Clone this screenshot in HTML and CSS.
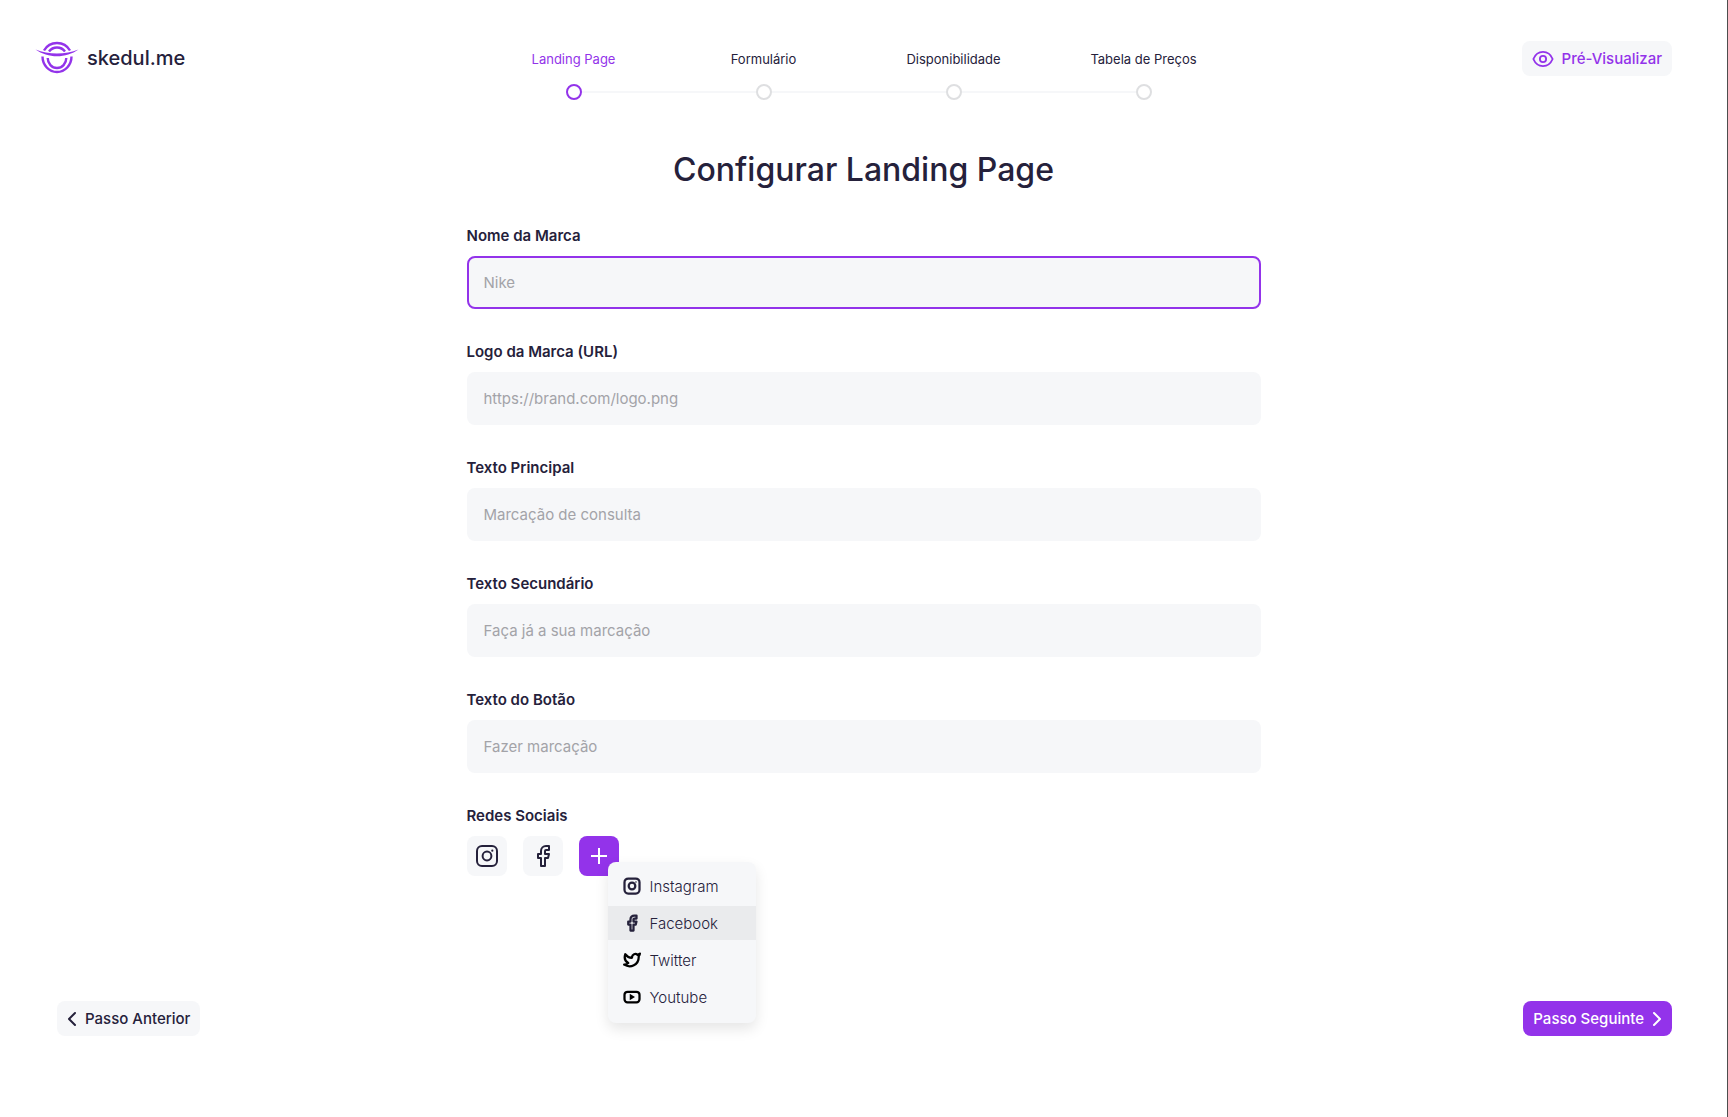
FILE: index.html
```html
<!DOCTYPE html>
<html lang="pt">
<head>
<meta charset="utf-8">
<meta name="viewport" content="width=device-width, initial-scale=1">
<title>skedul.me – Configurar Landing Page</title>
<link rel="stylesheet" href="styles.css">
</head>
<body>
<svg class="sprite" aria-hidden="true">
  <symbol id="instagram" viewBox="0 0 24 24" fill="none" stroke="currentColor">
    <rect x="2" y="2" width="20" height="20" rx="5"/>
    <circle cx="12" cy="12" r="4.4"/>
    <circle cx="17.3" cy="6.7" r="1.1" fill="currentColor" stroke="none"/>
  </symbol>
  <symbol id="facebook" viewBox="0 0 24 24" fill="none" stroke="currentColor" stroke-linejoin="round">
    <path d="M18 2h-3a5 5 0 0 0-5 5v3H7v4h3v8h4v-8h3l1-4h-4V7a1 1 0 0 1 1-1h3z"/>
  </symbol>
  <symbol id="twitter" viewBox="0 0 24 24" fill="none" stroke="currentColor" stroke-linejoin="round">
    <path d="M22.5 3.5c-1 .7-2.1 1.2-3.2 1.5A4.5 4.5 0 0 0 12 8v1C8.500 9.100 5.300 7.400 3 4.300c-1.600 5-.4 9.200 4 11.700-1.600 1.600-3.300 2.200-5.500 2.200 8.500 5 19.500.6 19.500-10.700l-.1-.8c.8-.8 1.300-1.900 1.600-3.200z"/>
  </symbol>
  <symbol id="youtube" viewBox="0 0 24 24" fill="none" stroke="currentColor" stroke-linejoin="round">
    <rect x="2" y="5" width="20" height="14" rx="4"/>
    <path d="M9 7.800v8.400l7-4.200z" fill="currentColor" stroke="none"/>
  </symbol>
</svg>

<header class="topbar">
  <a class="brand" href="#">
    <svg class="brand-mark" viewBox="0 0 44 34" fill="none" stroke="currentColor" stroke-width="2.4" aria-hidden="true">
      <path d="M9 9.500a15 15 0 0 1 26 0"/>
      <path d="M14 10.500a10 10 0 0 1 16 0"/>
      <path d="M7.500 15.500a14.500 15.500 0 0 0 29 0"/>
      <path d="M12.700 17a9.300 10 0 0 0 18.600 0"/>
      <path d="M.5 8.500c13 5.300 30 5.300 43 0C31 17.500 13 17.500 .5 8.500z" fill="currentColor" stroke="none"/>
    </svg>
    <span>skedul.me</span>
  </a>
  <ol class="steps">
    <li class="step current" aria-current="step">Landing Page</li>
    <li class="step">Formulário</li>
    <li class="step">Disponibilidade</li>
    <li class="step">Tabela de Preços</li>
  </ol>
  <button class="btn btn-preview" type="button">
    <svg class="icon-eye" viewBox="0 0 24 24" fill="none" stroke="currentColor" stroke-width="2" aria-hidden="true">
      <path d="M1.500 12C3.500 7.200 7.400 4.300 12 4.300S20.500 7.200 22.500 12c-2 4.800-5.900 7.700-10.500 7.700S3.500 16.800 1.500 12z"/>
      <circle cx="12" cy="12" r="3.400"/>
    </svg>
    Pré-Visualizar
  </button>
</header>

<main class="content">
  <h1>Configurar Landing Page</h1>
  <form class="form">
    <div class="field">
      <label for="brand-name">Nome da Marca</label>
      <input class="active" id="brand-name" type="text" placeholder="Nike">
    </div>
    <div class="field">
      <label for="brand-logo">Logo da Marca (URL)</label>
      <input id="brand-logo" type="url" placeholder="https://brand.com/logo.png">
    </div>
    <div class="field">
      <label for="main-text">Texto Principal</label>
      <input id="main-text" type="text" placeholder="Marcação de consulta">
    </div>
    <div class="field">
      <label for="second-text">Texto Secundário</label>
      <input id="second-text" type="text" placeholder="Faça já a sua marcação">
    </div>
    <div class="field">
      <label for="button-text">Texto do Botão</label>
      <input id="button-text" type="text" placeholder="Fazer marcação">
    </div>
    <div class="field" role="group" aria-labelledby="social-label">
      <span class="label" id="social-label">Redes Sociais</span>
      <div class="socials">
        <button class="social" type="button" aria-label="Instagram"><svg><use href="#instagram"/></svg></button>
        <button class="social" type="button" aria-label="Facebook"><svg><use href="#facebook"/></svg></button>
        <div class="add">
          <button class="social social-add" type="button" aria-label="Adicionar" aria-expanded="true">
            <svg viewBox="0 0 24 24" fill="none" stroke="currentColor" aria-hidden="true"><path d="M12 4v16M4 12h16"/></svg>
          </button>
          <div class="menu" role="menu">
            <button class="menu-item" type="button" role="menuitem"><svg><use href="#instagram"/></svg>Instagram</button>
            <button class="menu-item selected" type="button" role="menuitem"><svg><use href="#facebook"/></svg>Facebook</button>
            <button class="menu-item dark" type="button" role="menuitem"><svg><use href="#twitter"/></svg>Twitter</button>
            <button class="menu-item dark" type="button" role="menuitem"><svg><use href="#youtube"/></svg>Youtube</button>
          </div>
        </div>
      </div>
    </div>
  </form>
</main>

<footer class="pager">
  <button class="btn" type="button">
    <svg class="chevron" viewBox="0 0 10 16" aria-hidden="true"><path d="M8 2L2 8l6 6"/></svg>
    Passo Anterior
  </button>
  <button class="btn btn-primary" type="button">
    Passo Seguinte
    <svg class="chevron" viewBox="0 0 10 16" aria-hidden="true"><path d="M2 2l6 6-6 6"/></svg>
  </button>
</footer>
</body>
</html>
```
FILE: styles.css
```css
:root {
  --ink: #25213b;
  --purple: #9333ea;
  --soft: #f6f7f9;
  --placeholder: #a3a3a8;
}

*, *::before, *::after { box-sizing: border-box; }

body {
  margin: 0;
  min-height: 100vh;
  display: flex;
  flex-direction: column;
  border-right: 1px solid #4d4d4d;
  background: #fff;
  color: var(--ink);
  font: 15px/21px Inter, sans-serif;
}

button, input { font: inherit; color: inherit; }
button { border: 0; padding: 0; cursor: pointer; }
.sprite { display: none; }

.topbar {
  display: grid;
  grid-template-columns: 1fr minmax(0, 760px) 1fr;
  align-items: start;
  padding: 41px 45px 0 35px;
}

.brand {
  display: flex;
  align-items: center;
  gap: 8px;
  color: var(--ink);
  font-size: 20px;
  font-weight: 500;
  line-height: 33px;
  text-decoration: none;
}
.brand-mark { width: 44px; height: 34px; color: var(--purple); }

.steps {
  display: grid;
  grid-template-columns: repeat(4, 1fr);
  margin: 0;
  padding: 9px 0 0;
  list-style: none;
  font-size: 13px;
  line-height: 18px;
}
.step {
  position: relative;
  display: flex;
  flex-direction: column;
  align-items: center;
  gap: 16px;
}
.step::before {
  content: "";
  order: 1;
  width: 16px;
  height: 16px;
  border: 2px solid #dedfe1;
  border-radius: 50%;
}
/* line that joins a step to the next one */
.step::after {
  content: "";
  position: absolute;
  left: calc(50% + 8px);
  right: calc(8px - 50%);
  bottom: 7px;
  height: 2px;
  background: var(--soft);
}
.step:last-child::after { display: none; }
.step.current { color: var(--purple); }
.step.current::before { border-color: var(--purple); }

.btn {
  display: flex;
  align-items: center;
  gap: 8px;
  height: 35px;
  padding: 0 10px;
  border-radius: 8px;
  background: var(--soft);
  font-weight: 500;
  white-space: nowrap;
}
.btn-preview { justify-self: end; margin-right: 10px; color: var(--purple); }
.btn-primary { background: var(--purple); color: #fff; }
.icon-eye { width: 22px; height: 22px; }
.chevron {
  width: 10px;
  height: 16px;
  fill: none;
  stroke: currentColor;
  stroke-width: 2;
  stroke-linecap: round;
  stroke-linejoin: round;
}

.content {
  flex: 1;
  width: 100%;
  max-width: 794px;
  margin: 0 auto;
  padding: 46px 0 32px;
}
h1 {
  margin: 0 0 31px;
  font-size: 32px;
  font-weight: 500;
  line-height: 48px;
  text-align: center;
}
.form { display: flex; flex-direction: column; gap: 32px; }
.field { display: flex; flex-direction: column; gap: 10px; }
label, .label { font-weight: 600; }
input {
  height: 53px;
  padding: 0 15px;
  border: 2px solid transparent;
  border-radius: 8px;
  outline: 0;
  background: var(--soft);
}
input.active, input:focus { border-color: var(--purple); }
input::placeholder { color: var(--placeholder); opacity: 1; }

.socials { display: flex; gap: 16px; }
.social {
  display: grid;
  place-items: center;
  width: 40px;
  height: 40px;
  border-radius: 8px;
  background: var(--soft);
}
.social svg { width: 24px; height: 24px; stroke-width: 2; }
.social-add { background: var(--purple); color: #fff; }
.add { position: relative; }

.menu {
  position: absolute;
  top: 26px;
  left: 29px;
  display: flex;
  flex-direction: column;
  gap: 3px;
  width: 148px;
  padding: 7px 0 9px;
  border-radius: 8px;
  background: var(--soft);
  box-shadow: 0 6px 14px rgb(0 0 0 / 10%);
}
.menu-item {
  display: flex;
  align-items: center;
  gap: 9px;
  height: 34px;
  padding: 0 15px;
  background: none;
  font-weight: 300;
}
.menu-item.selected { background: #eaebed; }
.menu-item svg { width: 18px; height: 18px; stroke-width: 3; }
.menu-item.dark svg { color: #000; }

.pager {
  display: flex;
  justify-content: space-between;
  padding: 0 55px 81px 57px;
}
```
